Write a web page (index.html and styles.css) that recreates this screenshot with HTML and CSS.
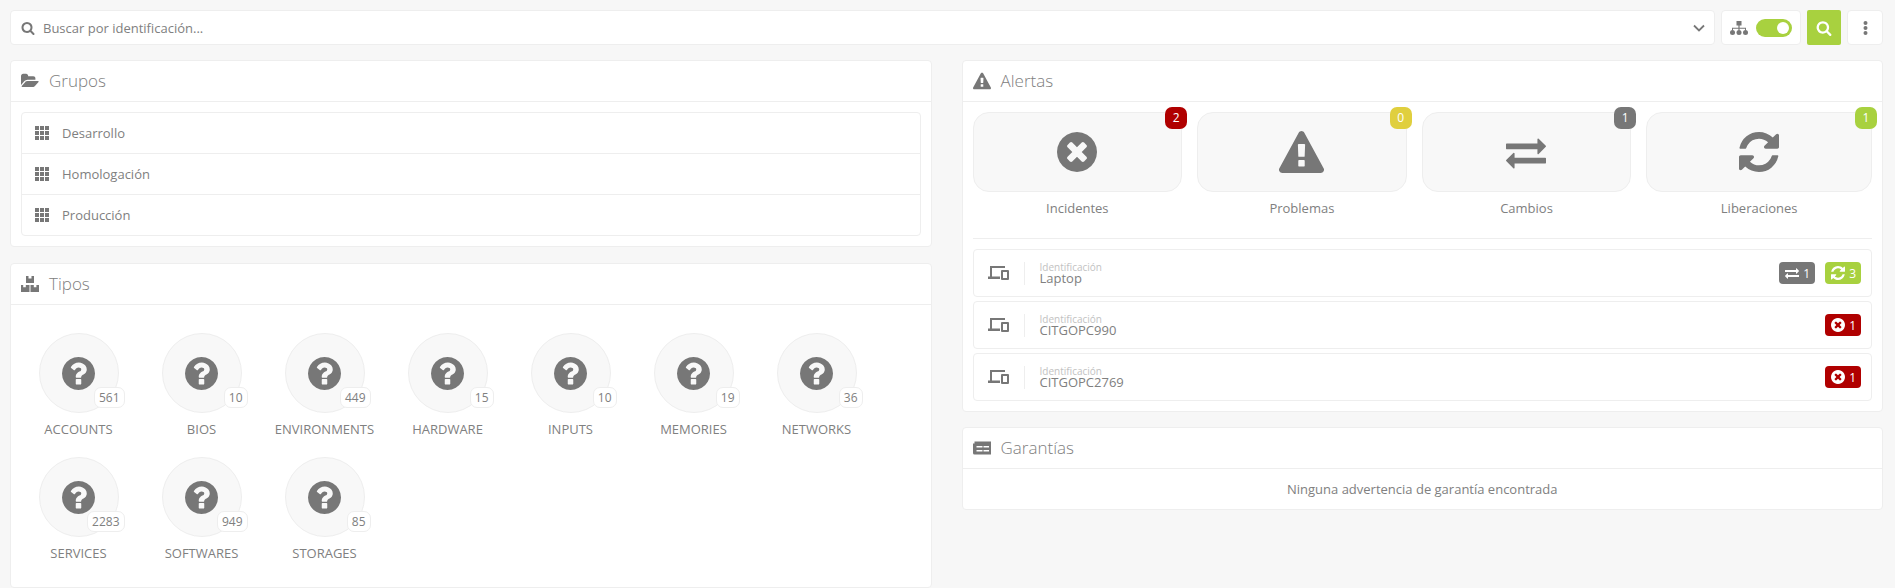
FILE: index.html
```html
<!DOCTYPE html>
<html lang="es">
<head>
    <meta charset="UTF-8">
    <title>Dashboard</title>
    <link rel="stylesheet" href="styles.css">
</head>
<body>
    <svg class="defs" width="0" height="0">
        <symbol id="i-search" viewBox="0 0 1792 1792"><path d="M1216 832q0-185-131.5-316.5t-316.5-131.5-316.5 131.5-131.5 316.5 131.5 316.5 316.5 131.5 316.5-131.5 131.5-316.5zm512 832q0 52-38 90t-90 38q-54 0-90-38l-343-342q-179 124-399 124-143 0-273.5-55.5t-225-150-150-225-55.5-273.5 55.5-273.5 150-225 225-150 273.5-55.5 273.5 55.5 225 150 150 225 55.5 273.5q0 220-124 399l343 343q37 37 37 90z"/></symbol>
        <symbol id="i-times" viewBox="128 128 1536 1536"><path d="M1277 1122q0-26-19-45l-181-181 181-181q19-19 19-45 0-27-19-46l-90-90q-19-19-46-19-26 0-45 19l-181 181-181-181q-19-19-45-19-27 0-46 19l-90 90q-19 19-19 46 0 26 19 45l181 181-181 181q-19 19-19 45 0 27 19 46l90 90q19 19 46 19 26 0 45-19l181-181 181 181q19 19 45 19 27 0 46-19l90-90q19-19 19-46zm387-226q0 209-103 385.5t-279.5 279.5-385.5 103-385.5-103-279.5-279.5-103-385.5 103-385.5 279.5-279.5 385.5-103 385.5 103 279.5 279.5 103 385.5z"/></symbol>
        <symbol id="i-warning" viewBox="0 0 1792 1664"><path d="M1024 1375v-190q0-14-9.5-23.5t-22.5-9.5h-192q-13 0-22.5 9.5t-9.5 23.5v190q0 14 9.5 23.5t22.5 9.5h192q13 0 22.5-9.5t9.5-23.5zm-2-374l18-459q0-12-10-19-13-11-24-11h-220q-11 0-24 11-10 7-10 21l17 457q0 10 10 16.5t24 6.5h185q14 0 23.5-6.5t10.5-16.5zm-14-934l768 1408q35 63-2 126-17 29-46.5 46t-63.5 17h-1536q-34 0-63.5-17t-46.5-46q-37-63-2-126l768-1408q17-31 47-49t65-18 65 18 47 49z"/></symbol>
        <symbol id="i-refresh" viewBox="128 128 1536 1536"><path d="M1639 1056q0 5-1 7-64 268-268 434.5t-478 166.5q-146 0-282.5-55t-243.5-157l-129 129q-19 19-45 19t-45-19-19-45v-448q0-26 19-45t45-19h448q26 0 45 19t19 45-19 45l-137 137q71 66 161 102t187 36q134 0 250-65t186-179q11-17 53-117 8-23 30-23h192q13 0 22.5 9.5t9.5 22.5zm25-800v448q0 26-19 45t-45 19h-448q-26 0-45-19t-19-45 19-45l138-138q-148-137-349-137-134 0-250 65t-186 179q-11 17-53 117-8 23-30 23h-199q-13 0-22.5-9.5t-9.5-22.5v-7q65-268 270-434.5t480-166.5q146 0 284 55.5t245 156.5l130-129q19-19 45-19t45 19 19 45z"/></symbol>
        <symbol id="i-exchange" viewBox="0 0 1792 1792"><path d="M1792 1184v192q0 13-9.5 22.5t-22.5 9.5h-1376v192q0 13-9.5 22.5t-22.5 9.5q-12 0-24-10l-319-320q-9-9-9-22 0-14 9-23l320-320q9-9 23-9 13 0 22.5 9.5t9.5 22.5v192h1376q13 0 22.5 9.5t9.5 22.5zm0-544q0 14-9 23l-320 320q-9 9-23 9-13 0-22.5-9.5t-9.5-22.5v-192h-1376q-13 0-22.5-9.5t-9.5-22.5v-192q0-13 9.5-22.5t22.5-9.5h1376v-192q0-14 9-23t23-9q12 0 24 10l319 319q9 9 9 23z"/></symbol>
        <symbol id="i-question" viewBox="128 128 1536 1536"><path d="M1024 1376v-192q0-14-9-23t-23-9h-192q-14 0-23 9t-9 23v192q0 14 9 23t23 9h192q14 0 23-9t9-23zm256-672q0-88-55.5-163t-138.5-116-170-41q-243 0-371 213-15 24 8 42l132 100q7 6 19 6 16 0 25-12 53-68 86-92 34-24 86-24 48 0 85.5 26t37.5 59q0 38-20 61t-68 45q-63 28-115.5 86.5t-52.5 125.5v36q0 14 9 23t23 9h192q14 0 23-9t9-23q0-19 21.5-49.5t54.5-49.5q32-18 49-28.5t46-35 44.5-48 28-60.5 12.5-81zm384 192q0 209-103 385.5t-279.5 279.5-385.5 103-385.5-103-279.5-279.5-103-385.5 103-385.5 279.5-279.5 385.5-103 385.5 103 279.5 279.5 103 385.5z"/></symbol>
        <symbol id="i-folder" viewBox="0 128 1920 1536"><path d="M1879 952q0 31-31 66l-336 396q-43 51-120.5 86.5t-143.5 35.5h-1088q-34 0-60.5-13t-26.5-43q0-31 31-66l336-396q43-51 120.5-86.5t143.5-35.5h1088q34 0 60.5 13t26.5 43zm-343-344v160h-832q-94 0-197 47.5t-164 119.5l-337 396-5 6q0-4-.5-12.5t-.5-12.5v-960q0-92 66-158t158-66h320q92 0 158 66t66 158v32h544q92 0 158 66t66 158z"/></symbol>
        <symbol id="i-grid" viewBox="0 0 14 14"><path d="M0 0h4v4H0zM5 0h4v4H5zM10 0h4v4h-4zM0 5h4v4H0zM5 5h4v4H5zM10 5h4v4h-4zM0 10h4v4H0zM5 10h4v4H5zM10 10h4v4h-4z"/></symbol>
        <symbol id="i-boxes" viewBox="0 0 18 16"><path d="M5 0h2.500v2.500h3V0H13v7H5zM0 9h2.200v2.200h2.600V9H8.500v7H0zM9.500 9h3.300v2.200h2.600V9H18v7H9.500z"/></symbol>
        <symbol id="i-devices" viewBox="0 0 21 14"><path d="M2 0h15v2H4v8.500h8V13H0v-2.500h2zM14 4h6a1 1 0 0 1 1 1v8a1 1 0 0 1-1 1h-6a1 1 0 0 1-1-1V5a1 1 0 0 1 1-1zm1 2v6h4V6z"/></symbol>
        <symbol id="i-news" viewBox="0 0 18 13"><path fill-rule="evenodd" d="M1.500 0H18v13H1.500A1.500 1.500 0 0 1 0 11.500V2h1.500zM3.500 4.500v1.500h6V4.500zM10.500 4.500v1.500h5.500V4.500zM3.500 8.500V10h6V8.500zM10.500 8.500V10h5.500V8.500z"/></symbol>
        <symbol id="i-sitemap" viewBox="0 0 18 14"><path d="M6.500 0h5v4.500H9.600v2.300h6.400v2.400h-1V7.800H9.600v1.400H8.400V7.800H3v1.400H2V6.800h6.400V4.500H6.500z"/><circle cx="2.500" cy="11.500" r="2.500"/><circle cx="9" cy="11.500" r="2.500"/><circle cx="15.500" cy="11.500" r="2.500"/></symbol>
        <symbol id="i-dots" viewBox="0 0 5 14"><circle cx="2.500" cy="2" r="2"/><circle cx="2.500" cy="7" r="2"/><circle cx="2.500" cy="12" r="2"/></symbol>
    </svg>

    <div class="topbar">
        <div class="box search">
            <svg class="icon search-icon"><use href="#i-search"/></svg>
            <span class="search-text">Buscar por identificación...</span>
            <svg class="chevron" viewBox="0 0 12 8"><path d="M1 1.500l5 5 5-5" fill="none" stroke="currentColor" stroke-width="1.800"/></svg>
        </div>
        <div class="box tree-toggle">
            <svg class="icon sitemap-icon"><use href="#i-sitemap"/></svg>
            <span class="switch"><span class="knob"></span></span>
        </div>
        <div class="search-btn"><svg class="icon btn-icon"><use href="#i-search"/></svg></div>
        <div class="box menu-btn"><svg class="icon dots-icon"><use href="#i-dots"/></svg></div>
    </div>

    <div class="columns">
        <div class="column">
            <section class="panel">
                <h2 class="panel-head"><svg class="icon head-icon"><use href="#i-folder"/></svg>Grupos</h2>
                <div class="panel-body">
                    <ul class="group-list">
                        <li><svg class="icon grid-icon"><use href="#i-grid"/></svg>Desarrollo</li>
                        <li><svg class="icon grid-icon"><use href="#i-grid"/></svg>Homologación</li>
                        <li><svg class="icon grid-icon"><use href="#i-grid"/></svg>Producción</li>
                    </ul>
                </div>
            </section>

            <section class="panel grow">
                <h2 class="panel-head"><svg class="icon head-icon"><use href="#i-boxes"/></svg>Tipos</h2>
                <div class="types">
                    <div class="type"><div class="circle"><svg class="icon q-icon"><use href="#i-question"/></svg><span class="count">561</span></div><div class="type-name">ACCOUNTS</div></div>
                    <div class="type"><div class="circle"><svg class="icon q-icon"><use href="#i-question"/></svg><span class="count">10</span></div><div class="type-name">BIOS</div></div>
                    <div class="type"><div class="circle"><svg class="icon q-icon"><use href="#i-question"/></svg><span class="count">449</span></div><div class="type-name">ENVIRONMENTS</div></div>
                    <div class="type"><div class="circle"><svg class="icon q-icon"><use href="#i-question"/></svg><span class="count">15</span></div><div class="type-name">HARDWARE</div></div>
                    <div class="type"><div class="circle"><svg class="icon q-icon"><use href="#i-question"/></svg><span class="count">10</span></div><div class="type-name">INPUTS</div></div>
                    <div class="type"><div class="circle"><svg class="icon q-icon"><use href="#i-question"/></svg><span class="count">19</span></div><div class="type-name">MEMORIES</div></div>
                    <div class="type"><div class="circle"><svg class="icon q-icon"><use href="#i-question"/></svg><span class="count">36</span></div><div class="type-name">NETWORKS</div></div>
                    <div class="type-break"></div>
                    <div class="type"><div class="circle"><svg class="icon q-icon"><use href="#i-question"/></svg><span class="count">2283</span></div><div class="type-name">SERVICES</div></div>
                    <div class="type"><div class="circle"><svg class="icon q-icon"><use href="#i-question"/></svg><span class="count">949</span></div><div class="type-name">SOFTWARES</div></div>
                    <div class="type"><div class="circle"><svg class="icon q-icon"><use href="#i-question"/></svg><span class="count">85</span></div><div class="type-name">STORAGES</div></div>
                </div>
            </section>
        </div>

        <div class="column right">
            <section class="panel">
                <h2 class="panel-head"><svg class="icon head-icon"><use href="#i-warning"/></svg>Alertas</h2>
                <div class="alerts">
                    <div class="tiles">
                        <div class="tile-wrap">
                            <div class="tile"><svg class="icon tile-icon"><use href="#i-times"/></svg><span class="tile-badge red">2</span></div>
                            <div class="tile-name">Incidentes</div>
                        </div>
                        <div class="tile-wrap">
                            <div class="tile"><svg class="icon tile-icon warn"><use href="#i-warning"/></svg><span class="tile-badge yellow">0</span></div>
                            <div class="tile-name">Problemas</div>
                        </div>
                        <div class="tile-wrap">
                            <div class="tile"><svg class="icon tile-icon"><use href="#i-exchange"/></svg><span class="tile-badge gray">1</span></div>
                            <div class="tile-name">Cambios</div>
                        </div>
                        <div class="tile-wrap">
                            <div class="tile"><svg class="icon tile-icon"><use href="#i-refresh"/></svg><span class="tile-badge green">1</span></div>
                            <div class="tile-name">Liberaciones</div>
                        </div>
                    </div>
                    <hr class="divider">
                    <div class="item">
                        <svg class="icon device-icon"><use href="#i-devices"/></svg>
                        <div class="item-text"><small>Identificación</small><span>Laptop</span></div>
                        <span class="pill gray"><svg class="icon pill-icon"><use href="#i-exchange"/></svg>1</span>
                        <span class="pill green"><svg class="icon pill-icon"><use href="#i-refresh"/></svg>3</span>
                    </div>
                    <div class="item">
                        <svg class="icon device-icon"><use href="#i-devices"/></svg>
                        <div class="item-text"><small>Identificación</small><span>CITGOPC990</span></div>
                        <span class="pill red"><svg class="icon pill-icon"><use href="#i-times"/></svg>1</span>
                    </div>
                    <div class="item">
                        <svg class="icon device-icon"><use href="#i-devices"/></svg>
                        <div class="item-text"><small>Identificación</small><span>CITGOPC2769</span></div>
                        <span class="pill red"><svg class="icon pill-icon"><use href="#i-times"/></svg>1</span>
                    </div>
                </div>
            </section>

            <section class="panel">
                <h2 class="panel-head"><svg class="icon head-icon"><use href="#i-news"/></svg>Garantías</h2>
                <div class="empty">Ninguna advertencia de garantía encontrada</div>
            </section>
        </div>
    </div>
</body>
</html>
```

FILE: styles.css
```css
html, body {
    height: 100%;
}

body {
    margin: 0;
    padding: 10px 12px 0 10px;
    box-sizing: border-box;
    display: flex;
    flex-direction: column;
    overflow: hidden;
    background-color: #f7f7f7;
    color: #808080;
    font-family: "Open Sans", sans-serif;
    font-size: 13px;
}

.defs {
    position: absolute;
}

.icon {
    display: block;
    flex: none;
    fill: #777;
}

/* top bar */
.topbar {
    display: flex;
    gap: 6px;
    height: 35px;
    margin-bottom: 15px;
    flex: none;
}

.box {
    display: flex;
    align-items: center;
    box-sizing: border-box;
    background-color: #fff;
    border: 1px solid #eee;
    border-radius: 4px;
}

.search {
    flex: 1;
    padding: 0 9px 0 10px;
}

.search-icon {
    width: 14px;
    height: 14px;
}

.search-text {
    flex: 1;
    margin-left: 8px;
}

.chevron {
    width: 12px;
    height: 8px;
    color: #777;
}

.tree-toggle {
    width: 80px;
    padding: 0 8px;
    justify-content: space-between;
}

.sitemap-icon {
    width: 18px;
    height: 14px;
}

.switch {
    display: flex;
    align-items: center;
    justify-content: flex-end;
    box-sizing: border-box;
    width: 36px;
    height: 18px;
    padding: 0 3px;
    border-radius: 9px;
    background-color: #a8d13f;
}

.knob {
    width: 12px;
    height: 12px;
    border-radius: 50%;
    background-color: #fff;
}

.search-btn {
    display: flex;
    align-items: center;
    justify-content: center;
    width: 34px;
    border-radius: 2px;
    background-color: #a8d13f;
}

.btn-icon {
    width: 16px;
    height: 16px;
    fill: #fff;
}

.menu-btn {
    width: 36px;
    justify-content: center;
}

.dots-icon {
    width: 5px;
    height: 14px;
}

/* panels */
.columns {
    flex: 1;
    display: grid;
    grid-template-columns: 1fr 1fr;
    gap: 30px;
    min-height: 0;
}

.column {
    display: flex;
    flex-direction: column;
    gap: 16px;
    min-height: 0;
}

.column.right {
    gap: 15px;
}

.panel {
    box-sizing: border-box;
    background-color: #fff;
    border: 1px solid #eee;
    border-radius: 4px;
}

.panel.grow {
    flex: 1;
}

.panel-head {
    display: flex;
    align-items: center;
    height: 38px;
    margin: 0;
    padding: 0 10px 2px;
    border-bottom: 1px solid #eee;
    font-size: 17px;
    font-weight: 300;
}

.head-icon {
    width: 18px;
    height: 18px;
    margin: 2px 10px 0 0;
}

.panel-body {
    padding: 10px;
}

.group-list {
    margin: 0;
    padding: 0;
    list-style: none;
    border: 1px solid #eee;
    border-radius: 4px;
}

.group-list li {
    display: flex;
    align-items: center;
    height: 40px;
    padding: 0 13px;
}

.group-list li + li {
    border-top: 1px solid #eee;
}

.grid-icon {
    width: 14px;
    height: 14px;
    margin-right: 13px;
}

/* types */
.types {
    display: flex;
    flex-wrap: wrap;
    padding: 28px 6px 0;
}

.type {
    width: 123px;
    height: 124px;
}

.type-break {
    flex-basis: 100%;
}

.circle {
    position: relative;
    display: flex;
    align-items: center;
    justify-content: center;
    box-sizing: border-box;
    width: 80px;
    height: 80px;
    margin: 0 auto;
    border: 1px solid #eee;
    border-radius: 50%;
    background-color: #f8f8f8;
}

.q-icon {
    width: 33px;
    height: 33px;
}

.count {
    position: absolute;
    right: -7px;
    bottom: 4px;
    padding: 0 4px;
    border: 1px solid #eee;
    border-radius: 7px;
    background-color: #fff;
    font-size: 12px;
    line-height: 19px;
}

.type-name {
    margin-top: 7px;
    text-align: center;
    line-height: 18px;
}

/* alerts */
.alerts {
    padding: 10px;
}

.tiles {
    display: grid;
    grid-template-columns: repeat(3, 209.6px) 1fr;
    gap: 15px;
}

.tile {
    position: relative;
    display: flex;
    align-items: center;
    justify-content: center;
    box-sizing: border-box;
    height: 80px;
    border: 1px solid #eee;
    border-radius: 16px;
    background-color: #f8f8f8;
}

.tile-icon {
    width: 40px;
    height: 40px;
}

.tile-icon.warn {
    width: 45px;
    height: 42px;
}

.tile-badge {
    position: absolute;
    top: -6px;
    right: -6px;
    width: 22px;
    height: 22px;
    border-radius: 7px;
    color: #fff;
    font-size: 12px;
    line-height: 22px;
    text-align: center;
}

.red {
    background-color: #b00000;
}

.yellow {
    background-color: #e0cf3e;
}

.gray {
    background-color: #777;
}

.green {
    background-color: #a8d13f;
}

.tile-name {
    margin-top: 7px;
    text-align: center;
    line-height: 18px;
}

.divider {
    height: 1px;
    margin: 21px 0 10px;
    border: 0;
    background-color: #eee;
}

.item {
    display: flex;
    align-items: center;
    gap: 10px;
    box-sizing: border-box;
    height: 48px;
    margin-top: 4px;
    padding: 0 10px 0 14px;
    border: 1px solid #eee;
    border-radius: 4px;
}

.divider + .item {
    margin-top: 0;
}

.device-icon {
    width: 21px;
    height: 14px;
    margin-right: 5px;
}

.item-text {
    flex: 1;
    display: flex;
    flex-direction: column;
    justify-content: center;
    height: 23px;
    padding-left: 15px;
    border-left: 1px solid #eee;
}

.item-text small {
    color: #c2c2c2;
    font-size: 10px;
    line-height: 10px;
}

.item-text span {
    line-height: 12px;
}

.pill {
    display: flex;
    align-items: center;
    gap: 4px;
    height: 22px;
    padding: 0 5px 0 6px;
    border-radius: 4px;
    color: #fff;
    font-size: 12px;
}

.pill-icon {
    width: 14px;
    height: 14px;
    fill: #fff;
}

.empty {
    height: 40px;
    line-height: 40px;
    text-align: center;
}
```
